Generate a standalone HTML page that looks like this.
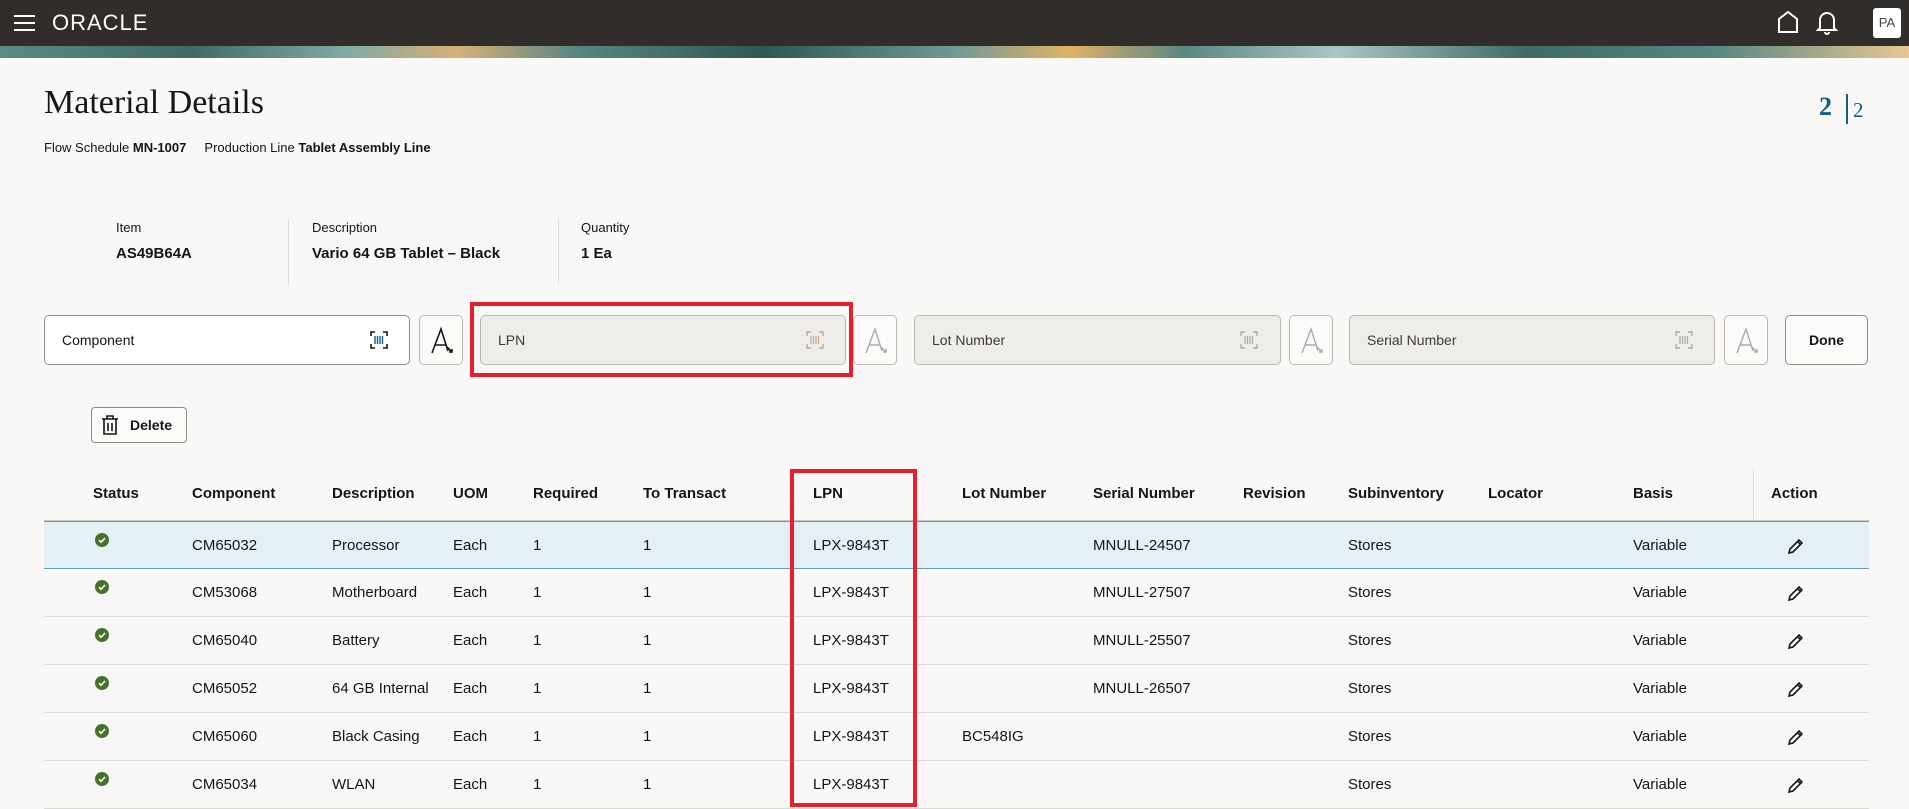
<!DOCTYPE html>
<html><head><meta charset="utf-8"><style>
*{box-sizing:border-box;margin:0;padding:0}
body{width:1909px;height:807px;overflow:hidden;background:#f9f8f6;font-family:"Liberation Sans",sans-serif;color:#161513;position:relative}
.abs{position:absolute}
.hdr{left:0;top:0;width:1909px;height:46px;background:#312d2a}
.banner{left:0;top:46px;width:1909px;height:12px;background:linear-gradient(90deg,#5d8a85 0%,#3f6a66 10%,#7ea9a5 18%,#d7b077 24%,#5a8783 30%,#2f5753 40%,#6f9995 50%,#e1b266 56%,#5a8783 62%,#a8c7c6 70%,#3f6a66 80%,#5a8783 90%,#e9c891 100%)}
.lbl{font-size:14px;color:#161513}
.inp{height:50px;border:1px solid #b9b6b2;border-radius:5px;background:#efedea;font-size:14px;color:#3d3a37;padding-left:17px;line-height:48px}
.abtn{width:44px;height:50px;border:1px solid #b9b6b2;border-radius:5px;background:#fcfbfa}
.th{top:485px;font-size:15px;font-weight:bold}
.row{left:44px;width:1825px;height:48px;border-bottom:1px solid #dcdad7}
.c{position:absolute;font-size:15px;line-height:48px;top:0}
.red{border:4px solid #e3202b}
</style></head><body>
<div class="abs hdr">
 <div class="abs" style="left:14px;top:15px;width:21px;height:2px;background:#fff;box-shadow:0 7px 0 #fff,0 14px 0 #fff"></div>
 <div class="abs" style="left:52px;top:10px;color:#fff;font-size:22px;letter-spacing:1px;font-weight:normal">ORACLE</div>
 <svg class="abs" style="left:1776px;top:10px" width="24" height="24" viewBox="0 0 24 24"><path d="M3 22V9L12 2L21 9V22Z" fill="none" stroke="#fff" stroke-width="2"/></svg>
 <svg class="abs" style="left:1816px;top:10px" width="22" height="26" viewBox="0 0 22 26"><path d="M4 18V10a7 7 0 0 1 14 0v8l2 2H2z M9 22a2 2 0 0 0 4 0" fill="none" stroke="#fff" stroke-width="2"/></svg>
 <div class="abs" style="left:1873px;top:8px;width:28px;height:30px;background:#fff;border-radius:3px;font-size:13px;color:#444;text-align:center;line-height:30px">PA</div>
</div>
<div class="abs banner"></div>
<div class="abs" style="left:44px;top:84px;font-family:'Liberation Serif',serif;font-size:34px">Material Details</div>
<div class="abs" style="left:44px;top:140px;font-size:13px">Flow Schedule <b>MN-1007</b> &nbsp; &nbsp; Production Line <b>Tablet Assembly Line</b></div>
<div class="abs" style="left:1819px;top:92px;font-family:'Liberation Serif',serif;font-size:26px;color:#0e6185;font-weight:bold">2</div>
<div class="abs" style="left:1846px;top:94px;width:2px;height:30px;background:#0e6185"></div>
<div class="abs" style="left:1853px;top:98px;font-family:'Liberation Serif',serif;font-size:21px;color:#0e6185">2</div>

<div class="abs lbl" style="left:116px;top:220px;font-size:13px">Item</div>
<div class="abs" style="left:116px;top:245px;font-size:15px;font-weight:bold">AS49B64A</div>
<div class="abs" style="left:288px;top:219px;width:1px;height:65px;background:#dcdad7"></div>
<div class="abs lbl" style="left:312px;top:220px;font-size:13px">Description</div>
<div class="abs" style="left:312px;top:245px;font-size:15px;font-weight:bold">Vario 64 GB Tablet – Black</div>
<div class="abs" style="left:558px;top:219px;width:1px;height:65px;background:#dcdad7"></div>
<div class="abs lbl" style="left:581px;top:220px;font-size:13px">Quantity</div>
<div class="abs" style="left:581px;top:245px;font-size:15px;font-weight:bold">1 Ea</div>

<div class="abs inp" style="left:44px;top:315px;width:366px;background:#fff;border-color:#8f8c88;color:#161513">Component</div>
<div class="abs inp" style="left:480px;top:315px;width:366px">LPN</div>
<div class="abs inp" style="left:914px;top:315px;width:367px">Lot Number</div>
<div class="abs inp" style="left:1349px;top:315px;width:366px">Serial Number</div>
<svg class="abs" style="left:370px;top:331px" width="18" height="18" viewBox="0 0 18 18"><path d="M1 5V1h4M13 1h4v4M17 13v4h-4M5 17H1v-4" fill="none" stroke="#161513" stroke-width="1.6"/><path d="M5 5v8M7.5 5v8M10 5v8M12.5 5v8" stroke="#0e6185" stroke-width="1.4"/></svg>
<svg class="abs" style="left:806px;top:331px" width="18" height="18" viewBox="0 0 18 18"><path d="M1 5V1h4M13 1h4v4M17 13v4h-4M5 17H1v-4" fill="none" stroke="#b9a89a" stroke-width="1.4"/><path d="M5 5v8M7.5 5v8M10 5v8M12.5 5v8" stroke="#c9a790" stroke-width="1.2"/></svg>
<svg class="abs" style="left:1240px;top:331px" width="18" height="18" viewBox="0 0 18 18"><path d="M1 5V1h4M13 1h4v4M17 13v4h-4M5 17H1v-4" fill="none" stroke="#aaa" stroke-width="1.4"/><path d="M5 5v8M7.5 5v8M10 5v8M12.5 5v8" stroke="#aaa" stroke-width="1.2"/></svg>
<svg class="abs" style="left:1675px;top:331px" width="18" height="18" viewBox="0 0 18 18"><path d="M1 5V1h4M13 1h4v4M17 13v4h-4M5 17H1v-4" fill="none" stroke="#aaa" stroke-width="1.4"/><path d="M5 5v8M7.5 5v8M10 5v8M12.5 5v8" stroke="#aaa" stroke-width="1.2"/></svg>

<div class="abs abtn" style="left:419px;top:315px"><svg width="44" height="50" viewBox="0 0 44 50"><path d="M12 37L21 13L28 35M15 29H26M27 31L32 36M29 36H32V33" fill="none" stroke="#161513" stroke-width="1.6"/></svg></div>
<div class="abs abtn" style="left:853px;top:315px"><svg width="44" height="50" viewBox="0 0 44 50"><path d="M12 37L21 13L28 35M15 29H26M27 31L32 36M29 36H32V33" fill="none" stroke="#aaa" stroke-width="1.4"/></svg></div>
<div class="abs abtn" style="left:1289px;top:315px"><svg width="44" height="50" viewBox="0 0 44 50"><path d="M12 37L21 13L28 35M15 29H26M27 31L32 36M29 36H32V33" fill="none" stroke="#aaa" stroke-width="1.4"/></svg></div>
<div class="abs abtn" style="left:1724px;top:315px"><svg width="44" height="50" viewBox="0 0 44 50"><path d="M12 37L21 13L28 35M15 29H26M27 31L32 36M29 36H32V33" fill="none" stroke="#aaa" stroke-width="1.4"/></svg></div>
<div class="abs" style="left:1785px;top:315px;width:83px;height:50px;border:1px solid #8f8c88;border-radius:5px;background:#fcfbfa;font-size:14px;font-weight:bold;text-align:center;line-height:48px">Done</div>

<div class="abs red" style="left:470px;top:302px;width:383px;height:75px"></div>

<div class="abs" style="left:91px;top:407px;width:96px;height:36px;border:1px solid #8f8c88;border-radius:4px;background:#fcfbfa;font-size:14px;font-weight:bold;line-height:34px;padding-left:38px">Delete</div>
<svg class="abs" style="left:101px;top:415px" width="18" height="20" viewBox="0 0 18 20"><path d="M1 4H17M6 4V1H12V4M3 4V19H15V4M7 8V16M11 8V16" fill="none" stroke="#161513" stroke-width="1.6"/></svg>

<div class="abs" style="left:1753px;top:469px;width:1px;height:52px;background:#dcdad7"></div>
<div class="abs th" style="left:93px">Status</div>
<div class="abs th" style="left:192px">Component</div>
<div class="abs th" style="left:332px">Description</div>
<div class="abs th" style="left:453px">UOM</div>
<div class="abs th" style="left:533px">Required</div>
<div class="abs th" style="left:643px">To Transact</div>
<div class="abs th" style="left:813px">LPN</div>
<div class="abs th" style="left:962px">Lot Number</div>
<div class="abs th" style="left:1093px">Serial Number</div>
<div class="abs th" style="left:1243px">Revision</div>
<div class="abs th" style="left:1348px">Subinventory</div>
<div class="abs th" style="left:1488px">Locator</div>
<div class="abs th" style="left:1633px">Basis</div>
<div class="abs th" style="left:1771px">Action</div>

<div id="rows"></div>
<script>
var d=[["CM65032","Processor","","MNULL-24507"],["CM53068","Motherboard","","MNULL-27507"],["CM65040","Battery","","MNULL-25507"],["CM65052","64 GB Internal","","MNULL-26507"],["CM65060","Black Casing","BC548IG",""],["CM65034","WLAN","",""]];
var h="";
d.forEach(function(r,i){
var top=521+i*48;var st=i==0?"background:#e4f0f5;border-top:1px solid #5f9fbd;border-bottom:1px solid #5f9fbd;":"";
h+='<div class="abs row" style="top:'+top+'px;'+st+'">'+
'<svg class="abs" style="left:51px;top:11px" width="14" height="14" viewBox="0 0 14 14"><circle cx="7" cy="7" r="7" fill="#48722b"/><path d="M4 7.2L6 9.2L10 5" fill="none" stroke="#fff" stroke-width="1.6"/></svg>'+
'<div class="c" style="left:148px">'+r[0]+'</div><div class="c" style="left:288px">'+r[1]+'</div><div class="c" style="left:409px">Each</div><div class="c" style="left:489px">1</div><div class="c" style="left:599px">1</div><div class="c" style="left:769px">LPX-9843T</div><div class="c" style="left:918px">'+r[2]+'</div><div class="c" style="left:1049px">'+r[3]+'</div><div class="c" style="left:1304px">Stores</div><div class="c" style="left:1589px">Variable</div>'+
'<svg class="abs" style="left:1743px;top:15px" width="18" height="18" viewBox="0 0 18 18"><path d="M2 16L3 12L12 3L15 6L6 15Z M10.5 4.5L13.5 7.5" fill="none" stroke="#161513" stroke-width="1.6"/></svg></div>';
});
document.getElementById("rows").innerHTML=h;
</script>
<div class="abs" style="left:44px;top:520px;width:1825px;height:1px;background:#c8c6c2"></div>
<div class="abs red" style="left:790px;top:469px;width:127px;height:338px;border-bottom-width:4px"></div>
</body></html>
